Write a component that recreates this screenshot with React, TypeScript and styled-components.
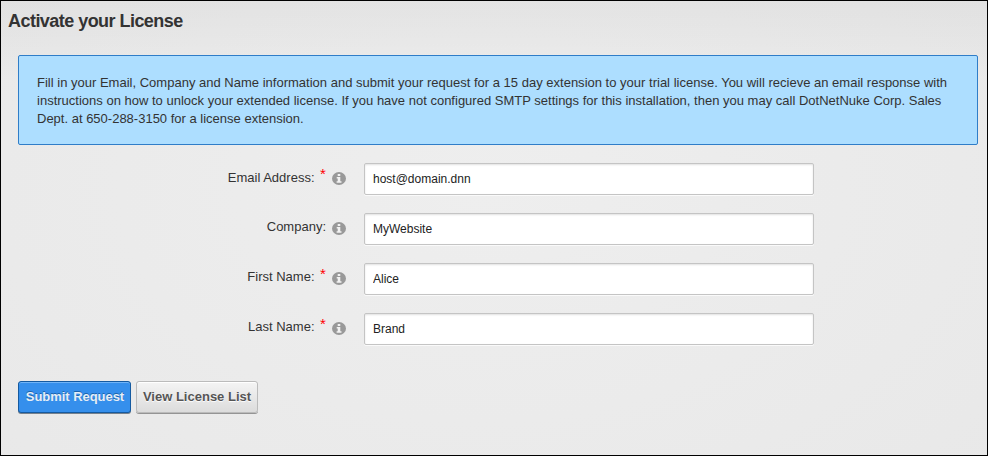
import React from "react";
import styled, { createGlobalStyle } from "styled-components";

const GlobalStyle = createGlobalStyle`
  * { box-sizing: border-box; }
  body { margin: 0; font-family: "Liberation Sans", Arial, sans-serif; color: #333; }
`;

const Panel = styled.main`
  width: 988px;
  height: 456px;
  border: 1px solid #000;
  padding: 8px 9px 0 17px;
  background:
    linear-gradient(rgba(0, 0, 0, 0.035), rgba(0, 0, 0, 0) 80px),
    radial-gradient(ellipse 720px 460px at 480px 190px, #eeeeee, #e8e8e8);
`;

const Title = styled.h1`
  margin: 0 0 0 -10px;
  height: 46px;
  font-size: 18px;
  line-height: 24px;
  letter-spacing: -0.54px;
  font-weight: bold;
`;

const Notice = styled.p`
  margin: 0;
  height: 90px;
  padding: 18px;
  border: 1px solid #2f7dc8;
  border-radius: 2px;
  background: #addeff;
  font-size: 13px;
  line-height: 18px;
  white-space: nowrap;
`;

const NoticeLine = styled.span<{ $tracking: number }>`
  display: block;
  letter-spacing: ${(p) => p.$tracking}px;
`;

const Form = styled.form`
  margin: 0;
`;

const Fields = styled.div`
  display: grid;
  gap: 18px;
  padding-top: 18px;
`;

const Field = styled.div`
  display: flex;
  height: 32px;
`;

const LabelArea = styled.div`
  display: flex;
  justify-content: flex-end;
  width: 328px;
  margin-right: 18px;
`;

const Label = styled.label<{ $drop?: number }>`
  padding-top: ${(p) => 5 + (p.$drop ?? 0)}px;
  font-size: 13px;
  line-height: 18px;
`;

const Required = styled.span`
  margin: 2px 0 0 5.5px;
  width: 6px;
  color: #f00;
  font-size: 15px;
  line-height: 18px;
`;

const InfoIcon = styled.svg`
  flex: none;
  width: 14px;
  height: 13px;
  margin: 9px 0 0 6px;
`;

const Input = styled.input`
  width: 450px;
  height: 32px;
  padding: 0 8px;
  border: 1px solid #c4c4c4;
  border-radius: 2px;
  outline: none;
  background: #fff;
  box-shadow: 0 1px 0 #fafafa, inset 0 1px 2px rgba(0, 0, 0, 0.12);
  color: #222;
  font: 12px/18px "Liberation Sans", Arial, sans-serif;
`;

const Actions = styled.div`
  display: flex;
  gap: 5px;
  margin-top: 36px;
`;

const Button = styled.button<{ $primary?: boolean }>`
  width: ${(p) => (p.$primary ? 113 : 122)}px;
  height: 32px;
  padding: 0 0 1px ${(p) => (p.$primary ? 1 : 0)}px;
  border: 1px solid ${(p) => (p.$primary ? "#155aa0" : "#bbb")};
  border-radius: 3px;
  background: ${(p) => (p.$primary ? "#358fec" : "linear-gradient(#f4f4f4, #dcdcdc)")};
  box-shadow: 0 1px 0 ${(p) => (p.$primary ? "#76818c" : "#949494")},
    inset 0 1px 0 ${(p) => (p.$primary ? "#70b4f8" : "#fff")};
  color: ${(p) => (p.$primary ? "#e6eef6" : "#555")};
  text-shadow: ${(p) => (p.$primary ? "0 -1px 0 #1b64ad" : "0 1px 1px #fff")};
  font: bold 13px/18px "Liberation Sans", Arial, sans-serif;
  letter-spacing: ${(p) => (p.$primary ? -0.05 : 0)}px;
  white-space: nowrap;
`;

const fields = [
  { id: "email", label: "Email Address:", value: "host@domain.dnn", required: true, drop: 1 },
  { id: "company", label: "Company:", value: "MyWebsite", required: false },
  { id: "first", label: "First Name:", value: "Alice", required: true },
  { id: "last", label: "Last Name:", value: "Brand", required: true },
];

export default function App() {
  return (
    <>
      <GlobalStyle />
      <Panel>
        <Title>Activate your License</Title>
        <Notice>
          <NoticeLine $tracking={0.007}>
            Fill in your Email, Company and Name information and submit your request for a 15 day extension to your trial license. You will recieve an email response with
          </NoticeLine>
          <NoticeLine $tracking={0.004}>
            instructions on how to unlock your extended license. If you have not configured SMTP settings for this installation, then you may call DotNetNuke Corp. Sales
          </NoticeLine>
          <NoticeLine $tracking={0}>Dept. at 650-288-3150 for a license extension.</NoticeLine>
        </Notice>
        <Form>
          <Fields>
            {fields.map((f) => (
              <Field key={f.id}>
                <LabelArea>
                  <Label htmlFor={f.id} $drop={f.drop}>{f.label}</Label>
                  {f.required && <Required>*</Required>}
                  <InfoIcon viewBox="0 0 14 13" aria-hidden="true">
                    <ellipse cx="7" cy="6.5" rx="7" ry="6.5" fill="#999" />
                    <path d="M5.7 2h2.6v2H5.7zM4.7 5h3.6v4.3h1.2v1.4H4.6V9.3h1.1V6.4h-1z" fill="#f2f2f2" />
                  </InfoIcon>
                </LabelArea>
                <Input id={f.id} defaultValue={f.value} />
              </Field>
            ))}
          </Fields>
          <Actions>
            <Button type="button" $primary>Submit Request</Button>
            <Button type="button">View License List</Button>
          </Actions>
        </Form>
      </Panel>
    </>
  );
}
